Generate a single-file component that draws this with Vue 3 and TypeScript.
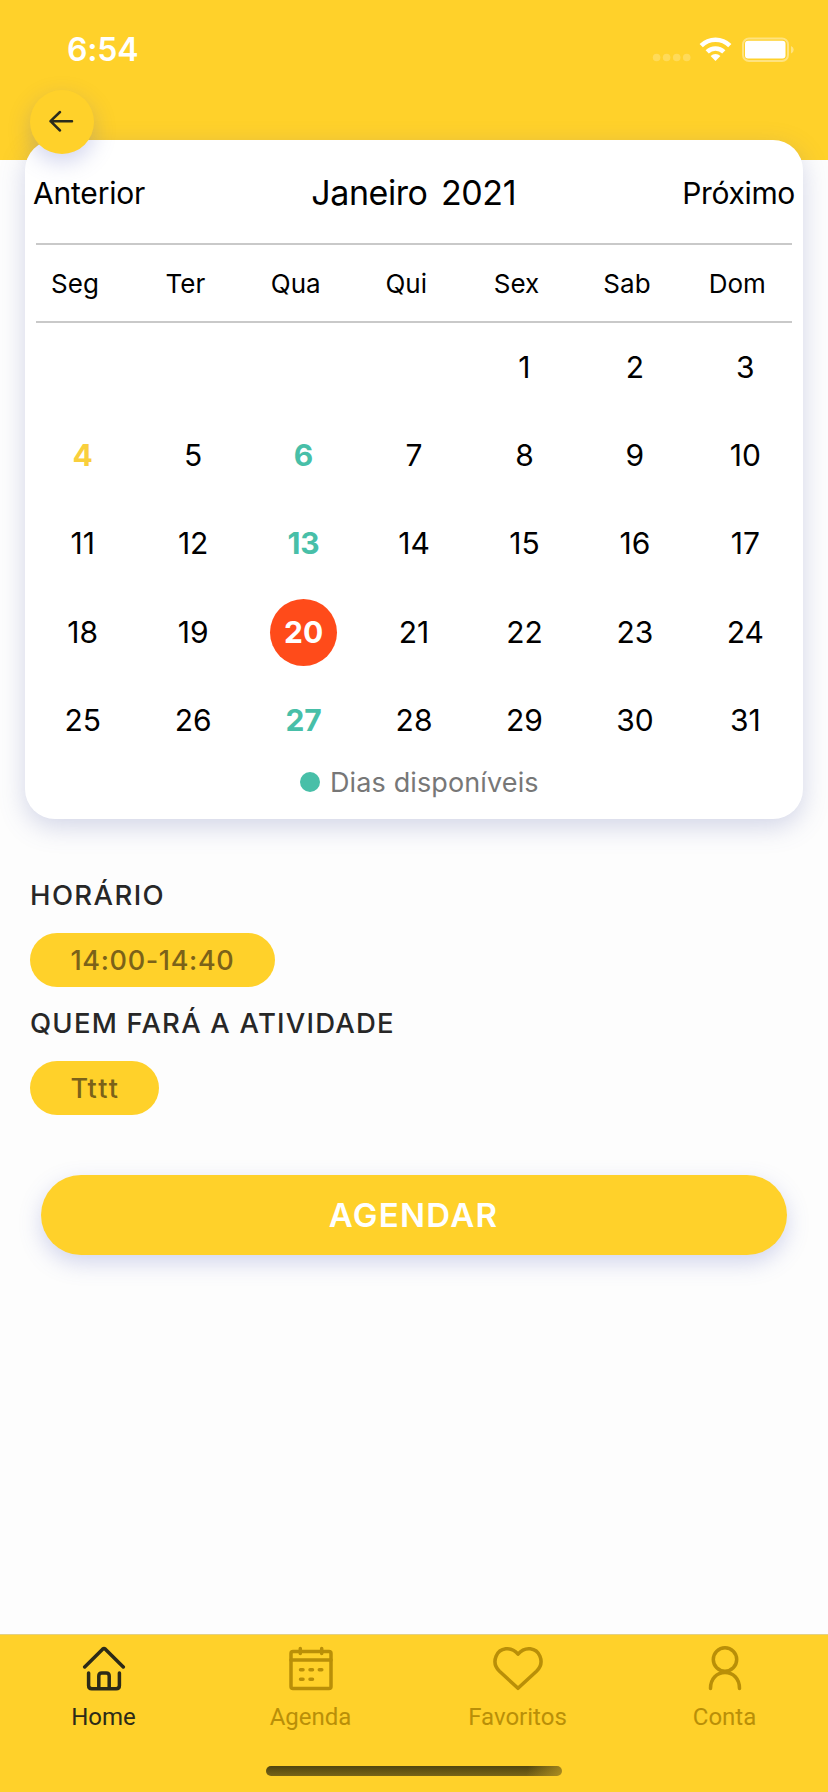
<script setup lang="ts">
import { ref } from 'vue'

type DayKind = 'normal' | 'today' | 'available' | 'selected'
interface Day {
  value: number | null
  kind: DayKind
}

const weekdays: string[] = ['Seg', 'Ter', 'Qua', 'Qui', 'Sex', 'Sab', 'Dom']
const available = [6, 13, 27]
const today = 4
const selected = ref<number>(20)
const leadingBlanks = 4

function kindOf(n: number): DayKind {
  if (n === selected.value) return 'selected'
  if (n === today) return 'today'
  return available.includes(n) ? 'available' : 'normal'
}

const days: Day[] = [
  ...Array.from({ length: leadingBlanks }, (): Day => ({ value: null, kind: 'normal' })),
  ...Array.from({ length: 31 }, (_, i): Day => ({ value: i + 1, kind: kindOf(i + 1) })),
]

const tabs = ['Home', 'Agenda', 'Favoritos', 'Conta']
const activeTab = ref('Home')
</script>

<template>
  <div class="screen">
    <header class="top">
      <div class="status">
        <span class="clock">6:54</span>
        <svg class="status-icons" width="146" height="30" viewBox="0 0 146 30" fill="#fff">
          <g opacity="0.22">
            <circle cx="8.6" cy="23.5" r="3.8" />
            <circle cx="18.6" cy="23.5" r="3.8" />
            <circle cx="28.7" cy="23.5" r="3.8" />
            <circle cx="38.7" cy="23.5" r="3.8" />
          </g>
          <g fill="none" stroke="#fff" stroke-width="4.6">
            <path d="M53.2 11.7A20.2 20.2 0 0 1 81.8 11.7" />
            <path d="M59.2 17.8A11.9 11.9 0 0 1 75.8 17.8" />
          </g>
          <path d="M67.5 27L62.6 22.1A7 7 0 0 1 72.4 22.1Z" />
          <rect x="95" y="4.500" width="45" height="22.500" rx="6" fill="none" stroke="#fff" stroke-width="2" opacity="0.4" />
          <rect x="97" y="6.700" width="40.500" height="17.800" rx="3" />
          <path d="M143 12Q145.700 13 145.700 15.700Q145.700 18.500 143 19.500Z" opacity="0.4" />
        </svg>
      </div>
      <button class="back" aria-label="Voltar">
        <svg width="28" height="24" viewBox="0 0 28 24" fill="none" stroke="#2b2b1c" stroke-width="2.500" stroke-linecap="round" stroke-linejoin="round">
          <path d="M24 11.200H2.500M12 2L2.500 11.200L12 20.500" />
        </svg>
      </button>
    </header>

    <main>
      <section class="calendar">
        <div class="month-row">
          <span class="nav">Anterior</span>
          <span class="month">Janeiro 2021</span>
          <span class="nav next">Próximo</span>
        </div>
        <div class="weekdays">
          <span v-for="w in weekdays" :key="w" class="weekday">{{ w }}</span>
        </div>
        <div class="days">
          <span v-for="(d, i) in days" :key="i" class="day" :class="d.kind">
            <span class="num">{{ d.value ?? '' }}</span>
          </span>
        </div>
        <div class="legend"><i class="dot"></i><span>Dias disponíveis</span></div>
      </section>

      <section class="options">
        <h2>HORÁRIO</h2>
        <span class="pill time">14:00-14:40</span>
        <h2 class="who">QUEM FARÁ A ATIVIDADE</h2>
        <span class="pill name">Tttt</span>
      </section>

      <button class="cta">AGENDAR</button>
    </main>

    <nav class="tabs">
      <a v-for="t in tabs" :key="t" class="tab" :class="[t.toLowerCase(), { active: t === activeTab }]">
        <svg width="52" height="46" viewBox="0 0 52 46" fill="none" stroke="currentColor" stroke-width="3.500" stroke-linecap="round" stroke-linejoin="round">
          <template v-if="t === 'Home'">
            <path d="M6.700 21L24.600 3.200Q26 2 27.400 3.200L45.300 21" />
            <path d="M10.600 27V39.500Q10.600 42.700 13.800 42.700H38.200Q41.400 42.700 41.400 39.500V27" />
            <path d="M20.800 42V30Q20.800 27 23.800 27H28.200Q31.200 27 31.200 30V42" />
          </template>
          <template v-else-if="t === 'Agenda'">
            <rect x="6" y="5.500" width="40" height="37" rx="2" />
            <path d="M6 14H46M15.300 2.500V7.500M36.700 2.500V7.500" />
            <path d="M15.500 23.700H18M25 23.700H27.500M34.300 23.700H36.800M15.500 33.200H18M25 33.200H27.500" />
          </template>
          <template v-else-if="t === 'Favoritos'">
            <path d="M26 42.300L7.500 25.200C3.200 21 1.800 15.700 4.100 10.200C7.600 1.500 19 -0.300 26 8.200C33 -0.300 44.400 1.500 47.900 10.200C50.200 15.700 48.800 21 44.500 25.200Z" />
          </template>
          <template v-else>
            <circle cx="26" cy="13.500" r="11.700" />
            <path d="M11.500 42.500C11.500 32.500 18 26.500 26 26.500S40.500 32.500 40.500 42.500" />
          </template>
        </svg>
        <span class="label">{{ t }}</span>
      </a>
      <div class="home-indicator"></div>
    </nav>
  </div>
</template>

<style>
body {
  margin: 0;
  background: #fdfdfd;
}
</style>

<style scoped>
* {
  box-sizing: border-box;
}

.screen {
  width: 828px;
  height: 1792px;
  display: flex;
  flex-direction: column;
  background: #fdfdfd;
  font-family: Inter, "Liberation Sans", sans-serif;
  overflow: hidden;
}

button {
  border: 0;
  padding: 0;
  font-family: inherit;
}

.top {
  height: 160px;
  flex: none;
  background: #ffd12a;
}

.status {
  height: 90px;
  padding: 34px 34px 0 67px;
  display: flex;
  justify-content: space-between;
  align-items: flex-start;
}

.clock {
  color: #fff;
  font-size: 32px;
  line-height: 32px;
  font-weight: 600;
  letter-spacing: -0.2px;
}

.status-icons {
  display: block;
}

.back {
  position: relative;
  z-index: 2;
  width: 64px;
  height: 64px;
  margin-left: 30px;
  display: flex;
  align-items: center;
  justify-content: center;
  border-radius: 50%;
  background: #ffd12a;
  box-shadow: 0 8px 22px rgba(88, 100, 190, 0.28);
}

main {
  flex: 1;
  display: flex;
  flex-direction: column;
}

.calendar {
  position: relative;
  z-index: 1;
  height: 679px;
  margin: -20px 25px 0;
  border-radius: 30px;
  background: #fff;
  box-shadow: 0 8px 26px rgba(88, 100, 170, 0.26);
}

.month-row {
  height: 105px;
  margin: 0 11px;
  padding-top: 3px;
  display: flex;
  align-items: center;
  justify-content: space-between;
  border-bottom: 2px solid #c9c9c9;
}

.nav {
  margin: 0 -3px;
  font-size: 30px;
  letter-spacing: -0.2px;
}

.nav.next {
  letter-spacing: -0.35px;
}

.month {
  padding-bottom: 2px;
  font-size: 34px;
  letter-spacing: -0.45px;
  word-spacing: 4.5px;
}

.weekdays {
  height: 78px;
  margin: 0 11px;
  display: grid;
  grid-template-columns: repeat(7, 110.4px);
  align-items: center;
  border-bottom: 2px solid #c9c9c9;
}

.weekday {
  width: 78px;
  text-align: center;
  font-size: 26px;
}

.days {
  padding: 0 2.500px;
  display: grid;
  grid-template-columns: repeat(7, 110.45px);
  grid-auto-rows: 88.4px;
}

.day {
  display: flex;
  align-items: center;
  justify-content: center;
  font-size: 30px;
}

.num {
  width: 67px;
  height: 67px;
  line-height: 67px;
  text-align: center;
  border-radius: 50%;
}

.today {
  color: #f9cf3c;
  font-weight: 700;
}

.available {
  color: #48bfa8;
  font-weight: 700;
}

.selected {
  color: #fff;
  font-weight: 700;
}

.selected .num {
  background: #ff4b1a;
}

.legend {
  height: 35px;
  padding-left: 275px;
  display: flex;
  align-items: center;
  gap: 10px;
  color: #777;
  font-size: 27px;
  letter-spacing: 0.12px;
}

.dot {
  width: 20px;
  height: 20px;
  border-radius: 50%;
  background: #48bfa8;
}

.options {
  margin: 58px 30px 0;
  display: flex;
  flex-direction: column;
  align-items: flex-start;
}

h2 {
  margin: 0 0 20px;
  color: #272727;
  font-size: 27.500px;
  line-height: 36px;
  font-weight: 500;
  letter-spacing: 1.4px;
  white-space: nowrap;
}

h2.who {
  margin-top: 18px;
  letter-spacing: 1.2px;
}

.pill {
  height: 54px;
  padding-left: 40.500px;
  border-radius: 27px;
  background: #ffd12a;
  color: #7b6219;
  font-size: 27px;
  line-height: 55px;
  font-weight: 500;
}

.time {
  width: 245px;
  letter-spacing: 0.65px;
}

.name {
  width: 129px;
  letter-spacing: 2.2px;
}

.cta {
  height: 80px;
  margin: 60px 41px 0;
  border-radius: 40px;
  background: #ffd12a;
  box-shadow: 0 8px 22px rgba(88, 100, 190, 0.26);
  color: #fff;
  font-size: 33px;
  font-weight: 600;
  letter-spacing: 1.3px;
  text-indent: -1px;
}

.tabs {
  position: relative;
  flex: none;
  height: 158px;
  display: grid;
  grid-template-columns: repeat(4, 207px);
  border-top: 1px solid #e3d184;
  background: #ffd12a;
}

.tab {
  padding-top: 11px;
  display: flex;
  flex-direction: column;
  align-items: center;
  color: #b98f08;
}

.tab.active {
  color: #2c2a18;
}

.label {
  margin-top: 11px;
  font-family: Roboto, sans-serif;
  font-size: 24px;
  line-height: 28px;
}

.home-indicator {
  position: absolute;
  left: 266px;
  bottom: 16px;
  width: 296px;
  height: 10px;
  border-radius: 5px;
  background:
    linear-gradient(100deg, transparent 88%, rgba(190, 155, 35, 0.75) 100%),
    linear-gradient(#50450f, #776317);
}
</style>
